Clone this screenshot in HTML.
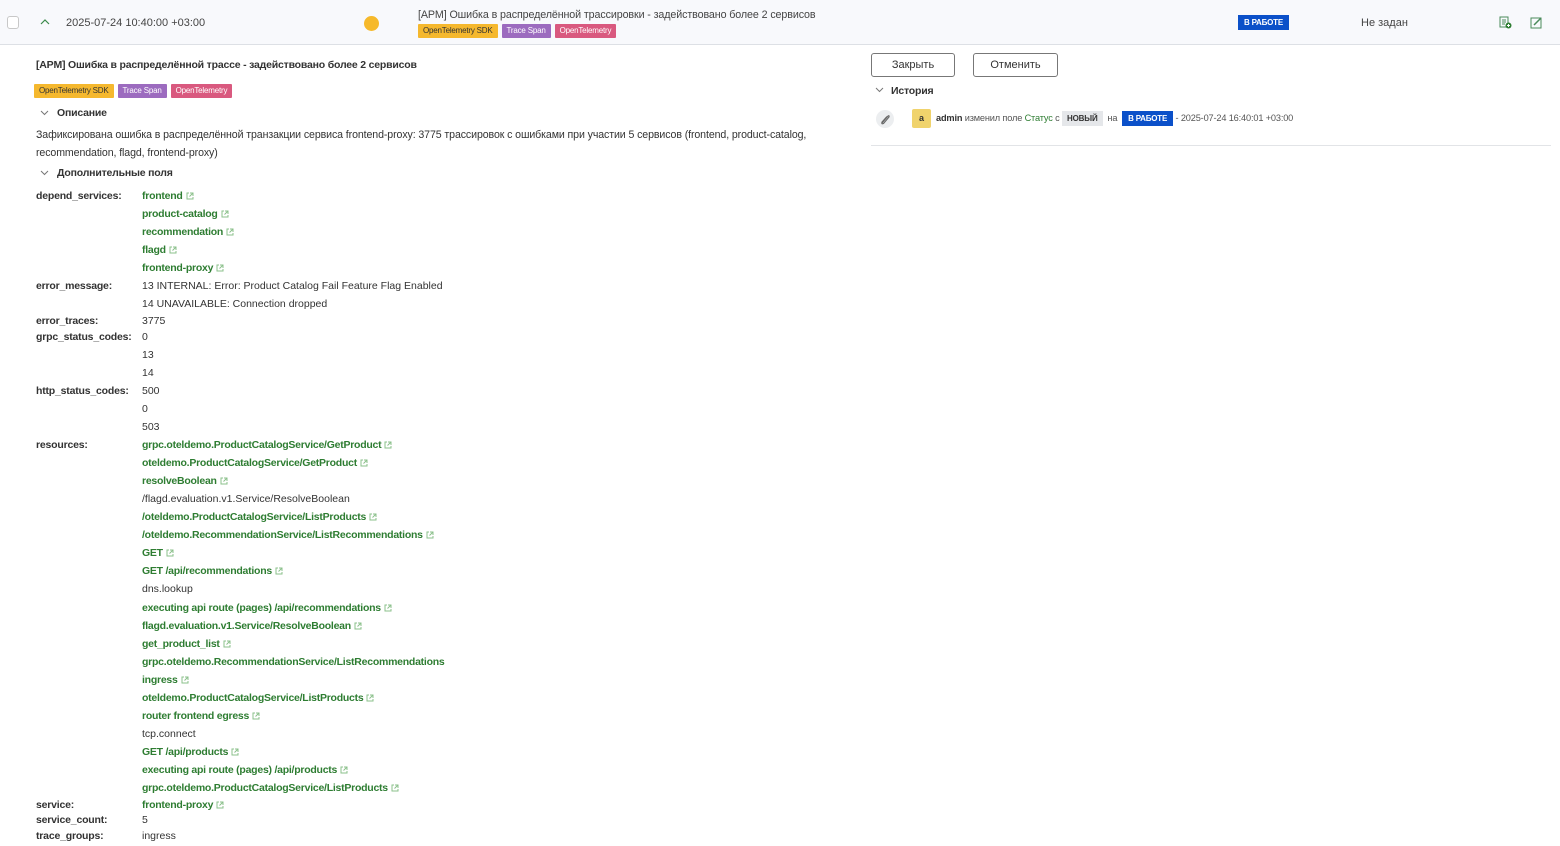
<!DOCTYPE html>
<html><head><meta charset="utf-8">
<style>
*{margin:0;padding:0;box-sizing:border-box}
body{width:1560px;height:846px;background:#fff;font-family:"Liberation Sans","Noto Sans CJK SC",sans-serif;color:#333;position:relative;overflow:hidden;font-size:10.5px}
.a{position:absolute;white-space:nowrap;line-height:14px}
.hdr{position:absolute;left:0;top:0;width:1560px;height:45px;background:#f8f9fc;border-bottom:1.5px solid #dde0e5}
.tag{display:inline-block;height:14px;line-height:14px;padding:0 5px;font-size:8px;border-radius:1px;margin-right:4px;vertical-align:top;letter-spacing:-0.2px}
.y{background:#f5b82e;color:#333}.p{background:#9c6bbf;color:#fff}.r{background:#d9597f;color:#fff}
.l{font-weight:bold;color:#333;letter-spacing:-0.2px}
.g{font-weight:bold;color:#2e7d32;letter-spacing:-0.25px}
.g svg{margin-left:3px;vertical-align:-1px}
.btn{position:absolute;height:24px;border:1px solid #777;border-radius:3px;background:#fff;font-size:11px;text-align:center;line-height:22px;color:#333}
.st{display:inline-block;background:#0b50c9;color:#fff;font-weight:bold;font-size:8px;padding:0 6px;height:15px;line-height:15px;letter-spacing:-0.2px}
.chev{position:absolute}
</style></head><body>
<div class="hdr"></div>
<div class="a" style="left:7px;top:16px;width:12px;height:13px;border:1px solid #c8c8c8;border-radius:3px;background:#fff"></div>
<svg class="a" style="left:40px;top:18px" width="10" height="7"><path d="M1 6 L5 2 L9 6" stroke="#3a8a4a" fill="none" stroke-width="1.2"/></svg>
<div class="a" style="left:66px;top:16px;font-size:11px;color:#444">2025-07-24 10:40:00 +03:00</div>
<div class="a" style="left:364px;top:16px;width:15px;height:15px;border-radius:50%;background:#f6b92b"></div>
<div class="a" style="left:418px;top:8px;font-size:10.7px;color:#444;letter-spacing:-0.1px">[APM] Ошибка в распределённой трассировки - задействовано более 2 сервисов</div>
<div class="a" style="left:418px;top:24px"><span class="tag y">OpenTelemetry SDK</span><span class="tag p">Trace Span</span><span class="tag r">OpenTelemetry</span></div>
<div class="a" style="left:1238px;top:15px"><span class="st">В РАБОТЕ</span></div>
<div class="a" style="left:1361px;top:16px;font-size:11px;color:#444">Не задан</div>
<svg class="a" style="left:1499px;top:16px" width="13" height="13"><rect x="1" y="1" width="8" height="10" fill="none" stroke="#4a8a5a"/><path d="M3 4h4M3 6h4M3 8h3" stroke="#4a8a5a"/><circle cx="9.5" cy="9.5" r="3" fill="#2e7d32"/><path d="M8 9.5h3M9.5 8v3" stroke="#fff"/></svg>
<svg class="a" style="left:1530px;top:16px" width="13" height="13"><rect x="1" y="2" width="10" height="10" fill="none" stroke="#4a8a5a"/><path d="M4 9 L11 2" stroke="#4a8a5a" stroke-width="1.5"/></svg>

<div class="a l" style="left:36px;top:58px">[APM] Ошибка в распределённой трассе - задействовано более 2 сервисов</div>
<div class="a" style="left:34px;top:84px"><span class="tag y">OpenTelemetry SDK</span><span class="tag p">Trace Span</span><span class="tag r">OpenTelemetry</span></div>
<svg class="chev" style="left:40px;top:110px" width="9" height="6"><path d="M1 1 L4.5 4.5 L8 1" stroke="#777" fill="none"/></svg>
<div class="a l" style="left:57px;top:106px">Описание</div>
<div class="a" style="left:36px;top:126px;line-height:18px;white-space:normal;width:810px;font-size:10.6px;letter-spacing:-0.1px">Зафиксирована ошибка в распределённой транзакции сервиса frontend-proxy: 3775 трассировок с ошибками при участии 5 сервисов (frontend, product-catalog, recommendation, flagd, frontend-proxy)</div>
<svg class="chev" style="left:40px;top:170px" width="9" height="6"><path d="M1 1 L4.5 4.5 L8 1" stroke="#777" fill="none"/></svg>
<div class="a l" style="left:57px;top:166px">Дополнительные поля</div>

<div class="a l" style="left:36px;top:189px">depend_services:</div>
<div class="a l" style="left:36px;top:279px">error_message:</div>
<div class="a l" style="left:36px;top:314px">error_traces:</div>
<div class="a l" style="left:36px;top:330px">grpc_status_codes:</div>
<div class="a l" style="left:36px;top:384px">http_status_codes:</div>
<div class="a l" style="left:36px;top:438px">resources:</div>
<div class="a l" style="left:36px;top:798px">service:</div>
<div class="a l" style="left:36px;top:813px">service_count:</div>
<div class="a l" style="left:36px;top:829px">trace_groups:</div>

<div style="position:absolute;left:142px;top:0">
<div class="a g" style="top:189px">frontend<svg width="8" height="8"><path d="M3 1H1v6h6V5M4 1h3v3M7 1L3.5 4.5" stroke="#8bc08b" fill="none"/></svg></div>
<div class="a g" style="top:207px">product-catalog<svg width="8" height="8"><path d="M3 1H1v6h6V5M4 1h3v3M7 1L3.5 4.5" stroke="#8bc08b" fill="none"/></svg></div>
<div class="a g" style="top:225px">recommendation<svg width="8" height="8"><path d="M3 1H1v6h6V5M4 1h3v3M7 1L3.5 4.5" stroke="#8bc08b" fill="none"/></svg></div>
<div class="a g" style="top:243px">flagd<svg width="8" height="8"><path d="M3 1H1v6h6V5M4 1h3v3M7 1L3.5 4.5" stroke="#8bc08b" fill="none"/></svg></div>
<div class="a g" style="top:261px">frontend-proxy<svg width="8" height="8"><path d="M3 1H1v6h6V5M4 1h3v3M7 1L3.5 4.5" stroke="#8bc08b" fill="none"/></svg></div>
<div class="a" style="top:279px">13 INTERNAL: Error: Product Catalog Fail Feature Flag Enabled</div>
<div class="a" style="top:297px">14 UNAVAILABLE: Connection dropped</div>
<div class="a" style="top:314px">3775</div>
<div class="a" style="top:330px">0</div>
<div class="a" style="top:348px">13</div>
<div class="a" style="top:366px">14</div>
<div class="a" style="top:384px">500</div>
<div class="a" style="top:402px">0</div>
<div class="a" style="top:420px">503</div>
<div class="a g" style="top:438px">grpc.oteldemo.ProductCatalogService/GetProduct<svg width="8" height="8"><path d="M3 1H1v6h6V5M4 1h3v3M7 1L3.5 4.5" stroke="#8bc08b" fill="none"/></svg></div>
<div class="a g" style="top:456px">oteldemo.ProductCatalogService/GetProduct<svg width="8" height="8"><path d="M3 1H1v6h6V5M4 1h3v3M7 1L3.5 4.5" stroke="#8bc08b" fill="none"/></svg></div>
<div class="a g" style="top:474px">resolveBoolean<svg width="8" height="8"><path d="M3 1H1v6h6V5M4 1h3v3M7 1L3.5 4.5" stroke="#8bc08b" fill="none"/></svg></div>
<div class="a" style="top:492px">/flagd.evaluation.v1.Service/ResolveBoolean</div>
<div class="a g" style="top:510px">/oteldemo.ProductCatalogService/ListProducts<svg width="8" height="8"><path d="M3 1H1v6h6V5M4 1h3v3M7 1L3.5 4.5" stroke="#8bc08b" fill="none"/></svg></div>
<div class="a g" style="top:528px">/oteldemo.RecommendationService/ListRecommendations<svg width="8" height="8"><path d="M3 1H1v6h6V5M4 1h3v3M7 1L3.5 4.5" stroke="#8bc08b" fill="none"/></svg></div>
<div class="a g" style="top:546px">GET<svg width="8" height="8"><path d="M3 1H1v6h6V5M4 1h3v3M7 1L3.5 4.5" stroke="#8bc08b" fill="none"/></svg></div>
<div class="a g" style="top:564px">GET /api/recommendations<svg width="8" height="8"><path d="M3 1H1v6h6V5M4 1h3v3M7 1L3.5 4.5" stroke="#8bc08b" fill="none"/></svg></div>
<div class="a" style="top:582px">dns.lookup</div>
<div class="a g" style="top:601px">executing api route (pages) /api/recommendations<svg width="8" height="8"><path d="M3 1H1v6h6V5M4 1h3v3M7 1L3.5 4.5" stroke="#8bc08b" fill="none"/></svg></div>
<div class="a g" style="top:619px">flagd.evaluation.v1.Service/ResolveBoolean<svg width="8" height="8"><path d="M3 1H1v6h6V5M4 1h3v3M7 1L3.5 4.5" stroke="#8bc08b" fill="none"/></svg></div>
<div class="a g" style="top:637px">get_product_list<svg width="8" height="8"><path d="M3 1H1v6h6V5M4 1h3v3M7 1L3.5 4.5" stroke="#8bc08b" fill="none"/></svg></div>
<div class="a g" style="top:655px">grpc.oteldemo.RecommendationService/ListRecommendations</div>
<div class="a g" style="top:673px">ingress<svg width="8" height="8"><path d="M3 1H1v6h6V5M4 1h3v3M7 1L3.5 4.5" stroke="#8bc08b" fill="none"/></svg></div>
<div class="a g" style="top:691px">oteldemo.ProductCatalogService/ListProducts<svg width="8" height="8"><path d="M3 1H1v6h6V5M4 1h3v3M7 1L3.5 4.5" stroke="#8bc08b" fill="none"/></svg></div>
<div class="a g" style="top:709px">router frontend egress<svg width="8" height="8"><path d="M3 1H1v6h6V5M4 1h3v3M7 1L3.5 4.5" stroke="#8bc08b" fill="none"/></svg></div>
<div class="a" style="top:727px">tcp.connect</div>
<div class="a g" style="top:745px">GET /api/products<svg width="8" height="8"><path d="M3 1H1v6h6V5M4 1h3v3M7 1L3.5 4.5" stroke="#8bc08b" fill="none"/></svg></div>
<div class="a g" style="top:763px">executing api route (pages) /api/products<svg width="8" height="8"><path d="M3 1H1v6h6V5M4 1h3v3M7 1L3.5 4.5" stroke="#8bc08b" fill="none"/></svg></div>
<div class="a g" style="top:781px">grpc.oteldemo.ProductCatalogService/ListProducts<svg width="8" height="8"><path d="M3 1H1v6h6V5M4 1h3v3M7 1L3.5 4.5" stroke="#8bc08b" fill="none"/></svg></div>
<div class="a g" style="top:798px">frontend-proxy<svg width="8" height="8"><path d="M3 1H1v6h6V5M4 1h3v3M7 1L3.5 4.5" stroke="#8bc08b" fill="none"/></svg></div>
<div class="a" style="top:813px">5</div>
<div class="a" style="top:829px">ingress</div>
</div>

<div class="btn" style="left:871px;top:53px;width:84px">Закрыть</div>
<div class="btn" style="left:973px;top:53px;width:85px">Отменить</div>
<svg class="chev" style="left:875px;top:87px" width="9" height="6"><path d="M1 1 L4.5 4.5 L8 1" stroke="#777" fill="none"/></svg>
<div class="a l" style="left:891px;top:84px">История</div>
<div class="a" style="left:876px;top:110px;width:18px;height:18px;border-radius:50%;background:#eceef0"></div>
<svg class="a" style="left:879px;top:113px" width="12" height="12"><path d="M3 10 L9 3 Q10.5 2 10 4 L4.5 10.5 Q2 11.5 3 9 L8 3.5" stroke="#666" fill="none" stroke-width="1.1"/></svg>
<div class="a" style="left:912px;top:109px;width:19px;height:19px;background:#f0d36c;border-radius:2px;text-align:center;line-height:19px;font-size:9px;font-weight:bold">a</div>
<div class="a" style="left:936px;top:111px;font-size:9.2px;color:#555;letter-spacing:-0.15px"><b style="color:#333">admin</b> изменил поле <span style="color:#2e7d32">Статус</span> с <span style="display:inline-block;background:#e5e7ea;color:#333;font-weight:bold;font-size:8px;padding:0 5px;height:15px;line-height:15px">НОВЫЙ</span> &nbsp;на &nbsp;<span class="st">В РАБОТЕ</span> - 2025-07-24 16:40:01 +03:00</div>
<div class="a" style="left:871px;top:145px;width:680px;height:1px;background:#e2e4e7"></div>
</body></html>
